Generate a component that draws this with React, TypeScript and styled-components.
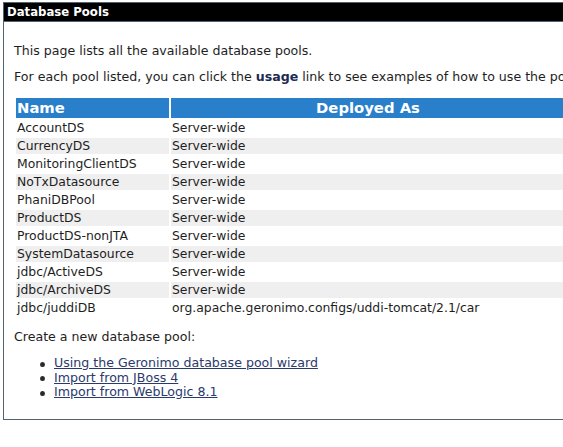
import React from "react";
import styled, { createGlobalStyle } from "styled-components";

const Global = createGlobalStyle`
  html, body {
    margin: 0;
    padding: 0;
    background: #ffffff;
    overflow: hidden;
  }
  body {
    font-family: "DejaVu Sans", Verdana, sans-serif;
    color: #1e1e1e;
  }
`;

const Page = styled.div`
  padding: 2px 0 0 3px;
`;

const Panel = styled.section`
  width: 572px;
  border: 1px solid #4f6574;
  background: #ffffff;
`;

const TitleBar = styled.h2`
  margin: 0;
  height: 18px;
  padding: 0 0 0 3px;
  background: #000000;
  border-bottom: 1px solid #4f6574;
  color: #ffffff;
  font-size: 11.7px;
  font-weight: bold;
  line-height: 19px;
  white-space: nowrap;
`;

const Body = styled.div`
  padding: 20px 10px 19px 10px;
`;

const Para = styled.p<{ $gap: number; $nowrap?: boolean }>`
  margin: 0 0 ${(p) => p.$gap}px 0;
  font-size: 12.6px;
  line-height: 18px;
  white-space: ${(p) => (p.$nowrap ? "nowrap" : "normal")};
`;

const Strong = styled.b`
  color: #1c2a52;
`;

const Table = styled.table`
  width: 100%;
  border-collapse: separate;
  border-spacing: 2px;
  margin: 0 0 10px 0;
`;

const HeadCell = styled.th<{ $align: "left" | "center"; $w?: number }>`
  background: #2a7fcb;
  color: #ffffff;
  font-size: 14.8px;
  font-weight: bold;
  height: 20px;
  line-height: 20px;
  padding: 0 0 0 1px;
  text-align: ${(p) => p.$align};
  width: ${(p) => (p.$w ? `${p.$w}px` : "auto")};
  white-space: nowrap;
`;

const Row = styled.tr<{ $alt: boolean }>`
  background: ${(p) => (p.$alt ? "#efefef" : "#ffffff")};
`;

const Cell = styled.td`
  height: 16px;
  line-height: 16px;
  padding: 0 0 0 1px;
  font-size: 12.4px;
  white-space: nowrap;
`;

const List = styled.ul`
  list-style: none;
  margin: 0;
  padding: 0 0 0 26px;
`;

const Item = styled.li`
  display: flex;
  align-items: flex-start;
  font-size: 12.6px;
  line-height: 14.5px;
  &::before {
    content: "";
    flex: none;
    width: 4.5px;
    height: 5px;
    margin: 5.5px 9.5px 0 0;
    border-radius: 50%;
    background: #2a2a2a;
  }
`;

const Link = styled.a`
  color: #2b3a6d;
  text-decoration: underline;
  white-space: nowrap;
`;

const pools = [
  ["AccountDS", "Server-wide"],
  ["CurrencyDS", "Server-wide"],
  ["MonitoringClientDS", "Server-wide"],
  ["NoTxDatasource", "Server-wide"],
  ["PhaniDBPool", "Server-wide"],
  ["ProductDS", "Server-wide"],
  ["ProductDS-nonJTA", "Server-wide"],
  ["SystemDatasource", "Server-wide"],
  ["jdbc/ActiveDS", "Server-wide"],
  ["jdbc/ArchiveDS", "Server-wide"],
  ["jdbc/juddiDB", "org.apache.geronimo.configs/uddi-tomcat/2.1/car"],
];

const links = [
  "Using the Geronimo database pool wizard",
  "Import from JBoss 4",
  "Import from WebLogic 8.1",
];

export default function App() {
  return (
    <Page>
      <Global />
      <Panel>
        <TitleBar>Database Pools</TitleBar>
        <Body>
          <Para $gap={8}>This page lists all the available database pools.</Para>
          <Para $gap={10} $nowrap>
            For each pool listed, you can click the <Strong>usage</Strong> link to see
            examples of how to use the pool.
          </Para>
          <Table>
            <thead>
              <tr>
                <HeadCell $align="left" $w={152}>Name</HeadCell>
                <HeadCell $align="center">Deployed As</HeadCell>
              </tr>
            </thead>
            <tbody>
              {pools.map(([name, dep], i) => (
                <Row key={name} $alt={i % 2 === 1}>
                  <Cell>{name}</Cell>
                  <Cell>{dep}</Cell>
                </Row>
              ))}
            </tbody>
          </Table>
          <Para $gap={10}>Create a new database pool:</Para>
          <List>
            {links.map((l) => (
              <Item key={l}>
                <Link href="#">{l}</Link>
              </Item>
            ))}
          </List>
        </Body>
      </Panel>
    </Page>
  );
}
